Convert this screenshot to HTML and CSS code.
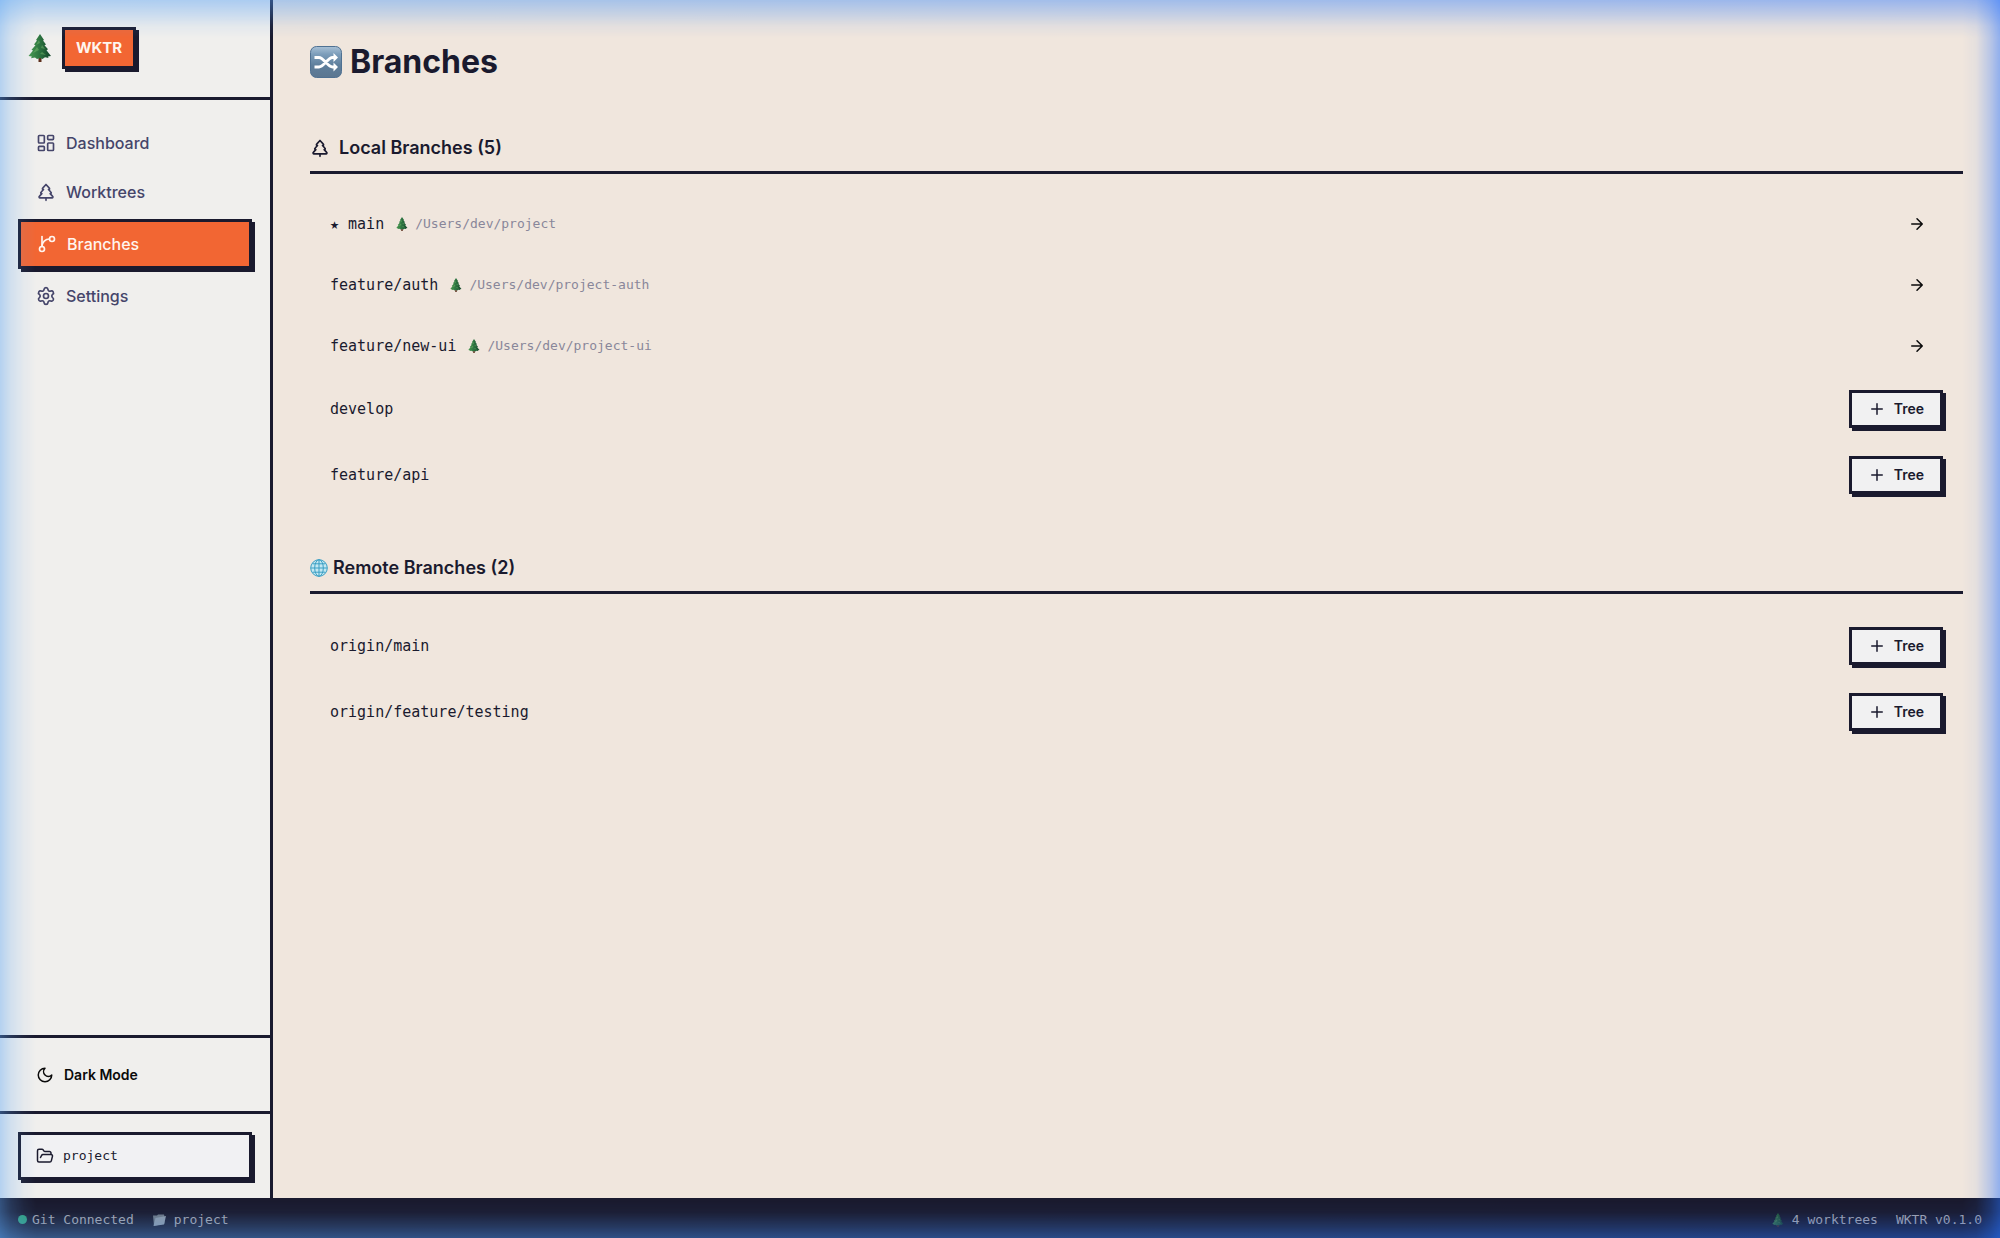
FILE: index.html
```html
<!DOCTYPE html>
<html lang="en">
<head>
    <meta charset="UTF-8">
    <meta name="viewport" content="width=device-width, initial-scale=1.0">
    <title>WKTR - Branches</title>
    <link rel="stylesheet" href="styles.css">
</head>
<body>
    <!-- shared icons -->
    <svg width="0" height="0" class="sprite" aria-hidden="true">
        <defs>
            <linearGradient id="tile" x1="0" y1="0" x2="0" y2="1">
                <stop offset="0" stop-color="#a9c1d6"/>
                <stop offset="0.25" stop-color="#7c9dba"/>
                <stop offset="0.6" stop-color="#5f7f9c"/>
                <stop offset="1" stop-color="#5b7690"/>
            </linearGradient>
            <linearGradient id="leaf" x1="0" y1="0" x2="1" y2="0">
                <stop offset="0" stop-color="#4a9a50"/>
                <stop offset="0.5" stop-color="#2c7440"/>
                <stop offset="1" stop-color="#14452a"/>
            </linearGradient>
        </defs>
        <symbol id="evergreen" viewBox="0 0 24 28">
            <path d="M10.5 23h3v5h-3z" fill="#5d2f1c"/>
            <path d="M12 0l4 6-1 .5 3 4-1.500.8 3.500 4-1.500 1 4.500 5.700-3 .4 .5 1.600-3.500-.7-2.500 1.700-2.500-1-3 1-2-1.500-4 .7.800-1.800-3.300-.4 4.500-5.500-1.500-.7 4-4.500-1.500-.8 3-4-1-.5z" fill="url(#leaf)"/>
            <path d="M11 6l-3 5 4-2zM9 13l-4 6 6-3zM14 11l3 4-4-1zM14 18l4 3-6-1z" fill="#7fbf72" opacity="0.45"/>
        </symbol>
        <symbol id="tree" viewBox="0 0 24 24">
            <path d="m17 14 3 3.300a1 1 0 0 1-.7 1.700H4.700a1 1 0 0 1-.7-1.700L7 14h-.3a1 1 0 0 1-.7-1.700L9 9h-.2A1 1 0 0 1 8 7.300L12 3l4 4.300a1 1 0 0 1-.8 1.700H15l3 3.300a1 1 0 0 1-.7 1.700H17Z"/>
            <path d="M12 22v-3"/>
        </symbol>
        <symbol id="arrow" viewBox="0 0 24 24"><path d="M5 12h14M12 5l7 7-7 7"/></symbol>
        <symbol id="plus" viewBox="0 0 24 24"><path d="M5 12h14M12 5v14"/></symbol>
    </svg>

    <div class="app">
        <div class="workspace">
            <aside class="sidebar">
                <div class="logo">
                    <svg class="logo-tree"><use href="#evergreen"/></svg>
                    <span class="logo-text">WKTR</span>
                </div>
                <nav class="nav">
                    <a class="nav-item" href="#dashboard">
                        <svg class="icon" viewBox="0 0 24 24"><rect width="7" height="9" x="3" y="3" rx="1"/><rect width="7" height="5" x="14" y="3" rx="1"/><rect width="7" height="9" x="14" y="12" rx="1"/><rect width="7" height="5" x="3" y="16" rx="1"/></svg>
                        Dashboard
                    </a>
                    <a class="nav-item" href="#worktrees">
                        <svg class="icon"><use href="#tree"/></svg>
                        Worktrees
                    </a>
                    <a class="nav-item active" href="#branches">
                        <svg class="icon" viewBox="0 0 24 24"><path d="M6 3v12"/><circle cx="18" cy="6" r="3"/><circle cx="6" cy="18" r="3"/><path d="M15 6a9 9 0 0 0-9 9"/></svg>
                        Branches
                    </a>
                    <a class="nav-item" href="#settings">
                        <svg class="icon" viewBox="0 0 24 24"><path d="M9.671 4.136a2.340 2.340 0 0 1 4.659 0 2.340 2.340 0 0 0 3.319 1.915 2.340 2.340 0 0 1 2.330 4.033 2.340 2.340 0 0 0 0 3.831 2.340 2.340 0 0 1-2.330 4.033 2.340 2.340 0 0 0-3.319 1.915 2.340 2.340 0 0 1-4.659 0 2.340 2.340 0 0 0-3.320-1.915 2.340 2.340 0 0 1-2.330-4.033 2.340 2.340 0 0 0 0-3.831A2.340 2.340 0 0 1 6.350 6.051a2.340 2.340 0 0 0 3.319-1.915"/><circle cx="12" cy="12" r="3"/></svg>
                        Settings
                    </a>
                </nav>
                <div class="side-block">
                    <button class="theme-btn" type="button">
                        <svg class="icon-sm" viewBox="0 0 24 24"><path d="M12 3a6 6 0 0 0 9 9 9 9 0 1 1-9-9Z"/></svg>
                        Dark Mode
                    </button>
                </div>
                <div class="side-block">
                    <button class="project-btn" type="button">
                        <svg class="icon-sm" viewBox="0 0 24 24"><path d="m6 14 1.500-2.900A2 2 0 0 1 9.240 10H20a2 2 0 0 1 1.940 2.500l-1.540 6a2 2 0 0 1-1.950 1.500H4a2 2 0 0 1-2-2V5a2 2 0 0 1 2-2h3.900a2 2 0 0 1 1.690.9l.81 1.200a2 2 0 0 0 1.670.9H18a2 2 0 0 1 2 2v2"/></svg>
                        project
                    </button>
                </div>
            </aside>

            <main class="content">
                <h1 class="title">
                    <svg class="title-icon" viewBox="0 0 32 32">
                        <rect x="0.500" y="0.500" width="31" height="31" rx="6" fill="url(#tile)" stroke="#4f7192"/>
                        <path d="M4.500 11.500h4.500c4.500 0 9 9.500 13.500 9.500h1.500M4.500 21h4.500c4.500 0 9-9.500 13.500-9.500h1.500" fill="none" stroke="#fff" stroke-width="2.800"/>
                        <path d="M23.500 7l4.500 4.500-4.500 4.500zM23.500 16.500l4.500 4.500-4.500 4.500z" fill="#fff"/>
                    </svg>
                    Branches
                </h1>

                <section class="group">
                    <h2 class="group-title"><svg class="icon"><use href="#tree"/></svg>Local Branches (5)</h2>
                    <ul class="list">
                        <li class="row">
                            <span class="name">★ main</span>
                            <span class="path"><svg class="emoji"><use href="#evergreen"/></svg>/Users/dev/project</span>
                            <button class="go-btn" type="button" aria-label="Open main"><svg class="icon-sm"><use href="#arrow"/></svg></button>
                        </li>
                        <li class="row">
                            <span class="name">feature/auth</span>
                            <span class="path"><svg class="emoji"><use href="#evergreen"/></svg>/Users/dev/project-auth</span>
                            <button class="go-btn" type="button" aria-label="Open feature/auth"><svg class="icon-sm"><use href="#arrow"/></svg></button>
                        </li>
                        <li class="row">
                            <span class="name">feature/new-ui</span>
                            <span class="path"><svg class="emoji"><use href="#evergreen"/></svg>/Users/dev/project-ui</span>
                            <button class="go-btn" type="button" aria-label="Open feature/new-ui"><svg class="icon-sm"><use href="#arrow"/></svg></button>
                        </li>
                        <li class="row">
                            <span class="name">develop</span>
                            <button class="tree-btn" type="button"><svg class="icon-sm"><use href="#plus"/></svg>Tree</button>
                        </li>
                        <li class="row">
                            <span class="name">feature/api</span>
                            <button class="tree-btn" type="button"><svg class="icon-sm"><use href="#plus"/></svg>Tree</button>
                        </li>
                    </ul>
                </section>

                <section class="group">
                    <h2 class="group-title remote">
                        <svg class="globe" viewBox="0 0 18 18">
                            <circle cx="9" cy="9" r="8.300" fill="#c3e8f2"/>
                            <g fill="none" stroke="#3a9fc4"><circle cx="9" cy="9" r="8.300"/><ellipse cx="9" cy="9" rx="4.300" ry="8.300"/><path d="M9 1v16M1 9h16M2.500 4.800h13M2.500 13.200h13"/></g>
                        </svg>
                        Remote Branches (2)
                    </h2>
                    <ul class="list">
                        <li class="row">
                            <span class="name">origin/main</span>
                            <button class="tree-btn" type="button"><svg class="icon-sm"><use href="#plus"/></svg>Tree</button>
                        </li>
                        <li class="row">
                            <span class="name">origin/feature/testing</span>
                            <button class="tree-btn" type="button"><svg class="icon-sm"><use href="#plus"/></svg>Tree</button>
                        </li>
                    </ul>
                </section>
            </main>
        </div>

        <footer class="status">
            <span class="status-item connected"><span class="dot"></span>Git Connected</span>
            <span class="status-item">
                <svg class="folder" viewBox="0 0 14 14"><path d="M1 2.500h4l1-1h6l.5 2v7L2 13z" fill="#6d7682"/><path d="M3.500 5 14 3l-2 8.500L1.500 13z" fill="#8d98a5"/></svg>
                project
            </span>
            <span class="status-item right"><svg class="emoji"><use href="#evergreen"/></svg>4 worktrees</span>
            <span class="status-item">WKTR v0.1.0</span>
        </footer>
    </div>
    <div class="glow"></div>
</body>
</html>
```

FILE: styles.css
```css
* {
    box-sizing: border-box;
}
body {
    margin: 0;
    font-family: Inter, "Open Sans", sans-serif;
    background-color: #f0e6dd;
    color: #1a1a2e;
}
button {
    font-family: inherit;
    cursor: pointer;
}
svg {
    flex-shrink: 0;
}
.sprite {
    position: absolute;
}
.app {
    display: flex;
    flex-direction: column;
    min-height: 100vh;
}
.workspace {
    display: flex;
    flex: 1;
}

/* icons */
.icon, .icon-sm {
    width: 20px;
    height: 20px;
    fill: none;
    stroke: currentColor;
    stroke-width: 2;
    stroke-linecap: round;
    stroke-linejoin: round;
}
.icon-sm {
    width: 18px;
    height: 18px;
}
.emoji {
    width: 12px;
    height: 14px;
}

/* sidebar */
.sidebar {
    display: flex;
    flex-direction: column;
    width: 273px;
    flex-shrink: 0;
    background-color: #f0efed;
    border-right: 3px solid #1a1a2e;
}
.logo {
    display: flex;
    align-items: center;
    gap: 10px;
    padding: 27px 28px 28px;
    border-bottom: 3px solid #1a1a2e;
}
.logo-tree {
    width: 24px;
    height: 28px;
}
.logo-text {
    padding: 6px 11px;
    font-size: 15px;
    line-height: 24px;
    font-weight: 700;
    color: #fff5ee;
    background-color: #f26633;
    border: 3px solid #1a1a2e;
    box-shadow: 3px 3px 0 #1a1a2e;
}
.nav {
    display: flex;
    flex-direction: column;
    gap: 5px;
    flex: 1;
    padding: 21px 18px;
}
.nav-item {
    display: flex;
    align-items: center;
    gap: 10px;
    padding: 10px 18px;
    font-size: 16px;
    line-height: 24px;
    font-weight: 500;
    color: #45456a;
    text-decoration: none;
}
.nav-item.active {
    color: #fff5ee;
    background-color: #f26633;
    border: 3px solid #1a1a2e;
    box-shadow: 3px 3px 0 #1a1a2e;
    padding: 10px 16px;
}
.side-block {
    padding: 18px;
    border-top: 3px solid #1a1a2e;
}
.theme-btn {
    display: flex;
    align-items: center;
    gap: 10px;
    width: 100%;
    padding: 8px 18px;
    font-size: 14px;
    line-height: 21px;
    font-weight: 600;
    color: #0a0a0a;
    background: none;
    border: none;
}
.project-btn {
    display: flex;
    align-items: center;
    gap: 9px;
    width: 100%;
    padding: 10px 15px;
    font-family: "DejaVu Sans Mono", monospace;
    font-size: 13px;
    line-height: 22px;
    color: #1a1a2e;
    background-color: #f1f1f3;
    border: 3px solid #1a1a2e;
    box-shadow: 3px 3px 0 #1a1a2e;
}

/* branches */
.content {
    flex: 1;
    padding: 37px;
}
.title {
    display: flex;
    align-items: center;
    gap: 8px;
    margin: 0 0 46px;
    font-size: 32px;
    line-height: 50px;
    font-weight: 700;
}
.title-icon {
    width: 32px;
    height: 32px;
}
.group {
    margin-bottom: 45px;
}
.group-title {
    display: flex;
    align-items: center;
    gap: 9px;
    margin: 0;
    padding-bottom: 8px;
    font-size: 18px;
    line-height: 30px;
    font-weight: 600;
    border-bottom: 3px solid #1a1a2e;
}
.group-title.remote {
    gap: 5px;
}
.globe {
    width: 18px;
    height: 18px;
}
.list {
    list-style: none;
    margin: 0;
    padding: 19px 0 0;
}
.row {
    display: flex;
    align-items: center;
    gap: 12px;
    padding: 14px 20px;
}
.name {
    font-family: "DejaVu Sans Mono", monospace;
    font-size: 15px;
    line-height: 24px;
}
.path {
    display: flex;
    align-items: center;
    gap: 7px;
    font-family: "DejaVu Sans Mono", monospace;
    font-size: 13px;
    line-height: 24px;
    color: #89879a;
}
.go-btn {
    margin-left: auto;
    display: flex;
    align-items: center;
    height: 33px;
    padding: 0 17px;
    color: #0a0a0a;
    background: none;
    border: none;
}
.tree-btn {
    margin-left: auto;
    display: flex;
    align-items: center;
    gap: 8px;
    height: 38px;
    padding: 0 16px;
    font-size: 14px;
    line-height: 20px;
    font-weight: 600;
    color: #1a1a2e;
    background-color: #f1f1f2;
    border: 3px solid #1a1a2e;
    box-shadow: 3px 3px 0 #1a1a2e;
}

/* status bar */
.status {
    display: flex;
    align-items: center;
    gap: 18px;
    padding: 11px 18px 8px;
    font-family: "DejaVu Sans Mono", monospace;
    font-size: 13px;
    line-height: 21px;
    color: #a3a2ab;
    background-color: #1a1a2e;
}
.status-item {
    display: flex;
    align-items: center;
    gap: 8px;
}
.status-item.connected {
    gap: 5px;
}
.status-item.right {
    margin-left: auto;
}
.status .emoji {
    opacity: 0.7;
}
.dot {
    width: 9px;
    height: 9px;
    border-radius: 50%;
    background-color: #2f9f78;
}
.folder {
    width: 14px;
    height: 14px;
}

/* blue glow round the window edge */
.glow {
    position: fixed;
    inset: 0;
    pointer-events: none;
    background: linear-gradient(90deg, #5aa5f5, #2873ff);
    mask-image:
        linear-gradient(to bottom, rgba(0,0,0,0.44), rgba(0,0,0,0.28) 12px, rgba(0,0,0,0.08) 26px, transparent 38px),
        linear-gradient(to top, rgba(0,0,0,0.44), rgba(0,0,0,0.24) 12px, rgba(0,0,0,0.04) 26px, transparent 38px),
        linear-gradient(to right, rgba(0,0,0,0.4), rgba(0,0,0,0.2) 11px, rgba(0,0,0,0.07) 24px, transparent 36px),
        linear-gradient(to left, rgba(0,0,0,0.48), rgba(0,0,0,0.27) 10px, rgba(0,0,0,0.05) 24px, transparent 38px);
}
```
